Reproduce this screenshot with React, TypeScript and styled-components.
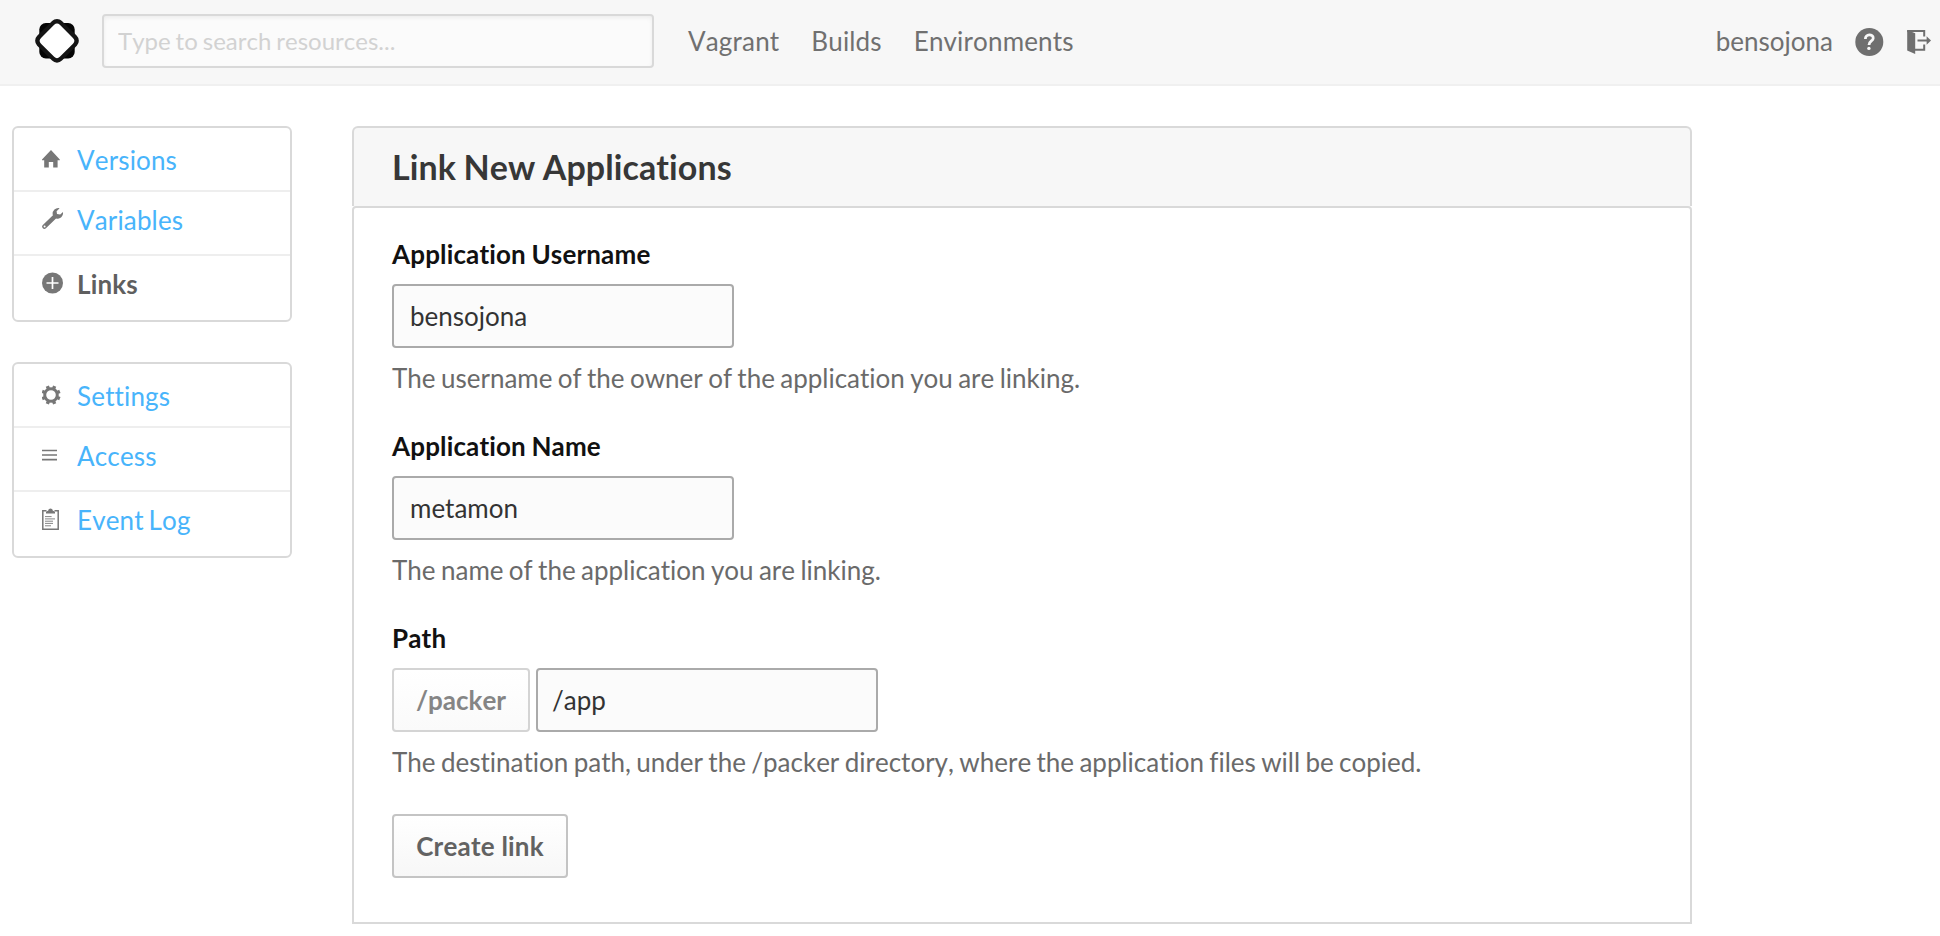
import React from "react";
import styled, { createGlobalStyle } from "styled-components";

const GlobalStyle = createGlobalStyle`
  *, *::before, *::after { box-sizing: border-box; }
  body {
    margin: 0;
    background: #fff;
    color: #666;
    font-family: Lato, sans-serif;
    font-size: 26px;
    line-height: 32px;
    font-kerning: none;
    font-variant-ligatures: none;
    -webkit-font-smoothing: antialiased;
  }
  input, button { font: inherit; font-kerning: none; font-variant-ligatures: none; }
`;

const TopBar = styled.header`
  display: flex;
  align-items: flex-start;
  height: 86px;
  padding: 14px 8px 0 34px;
  background: #f7f7f7;
  border-bottom: 2px solid #f0f0f0;
`;

const Logo = styled.svg`
  width: 46px;
  height: 46px;
  margin: 4px 22px 0 0;
`;

const Search = styled.input`
  width: 552px;
  height: 54px;
  padding: 0 14px 2px;
  border: 2px solid #d9d9d9;
  border-radius: 4px;
  background: #fbfbfb;
  box-shadow: inset 0 2px 4px rgba(0, 0, 0, 0.06);
  font-size: 24px;
  word-spacing: -1.2px;
  outline: none;
  &::placeholder { color: #d2d2d2; opacity: 1; }
`;

const Nav = styled.nav`
  display: flex;
  gap: 32px;
  margin: 11px 0 0 34px;
  letter-spacing: 0.15px;
`;

const NavLink = styled.a`
  color: #707070;
`;

const Account = styled.div`
  display: flex;
  margin: 11px 0 0 auto;
`;

const HelpIcon = styled.svg`
  width: 30px;
  height: 30px;
  margin: 2px 0 0 21px;
`;

const ExitIcon = styled.svg`
  width: 26px;
  height: 26px;
  margin: 4px 0 0 22px;
`;

const Page = styled.div`
  display: flex;
  align-items: flex-start;
  gap: 60px;
  padding: 40px 12px 0;
`;

const Sidebar = styled.aside`
  display: flex;
  flex-direction: column;
  gap: 40px;
  width: 280px;
`;

const Menu = styled.ul`
  list-style: none;
  margin: 0;
  padding: 0;
  height: 196px;
  border: 2px solid #d9d9d9;
  border-radius: 6px;
`;

const MenuItem = styled.li<{ $active?: boolean }>`
  display: flex;
  height: 64px;
  padding: 12px 0 0 28px;
  border-bottom: 2px solid #eee;
  color: ${(p) => (p.$active ? "#5f5f5f" : "#48b4fb")};
  font-weight: ${(p) => (p.$active ? 700 : 400)};
  letter-spacing: 0.15px;
  word-spacing: -2px;
  &:first-child { padding-top: 16px; }
  &:last-child { border-bottom: 0; }
`;

const MenuIcon = styled.svg`
  flex: none;
  width: 24px;
  height: 24px;
  margin: 2px 11px 0 0;
  color: #777;
`;

const Panel = styled.main`
  width: 1340px;
`;

const PanelHeader = styled.div`
  height: 80px;
  padding: 19px 38px 0;
  border: 2px solid #d9d9d9;
  border-bottom: 0;
  border-radius: 6px 6px 0 0;
  background: #f7f7f7;
`;

const Title = styled.h1`
  margin: 0;
  color: #373737;
  font-size: 34px;
  line-height: 40px;
  font-weight: 700;
  letter-spacing: 0.1px;
  word-spacing: -1px;
`;

const PanelBody = styled.form`
  height: 718px;
  padding: 30px 38px 0;
  border: 2px solid #d9d9d9;
  border-radius: 4px 4px 0 0;
`;

const Field = styled.div`
  height: 192px;
`;

const Label = styled.label`
  display: block;
  height: 46px;
  color: #111;
  font-weight: 700;
  letter-spacing: 0.15px;
  word-spacing: -1px;
`;

const Controls = styled.div`
  display: flex;
  gap: 6px;
`;

const Input = styled.input<{ $inset?: number }>`
  width: 342px;
  height: 64px;
  padding: 0 16px 0 ${(p) => p.$inset ?? 16}px;
  border: 2px solid #aaa;
  border-radius: 4px;
  background: #fbfbfb;
  color: #333;
  outline: none;
`;

const Hint = styled.p`
  margin: 14px 0 0;
  color: #6a6a6a;
  word-spacing: -1.3px;
`;

const Button = styled.button<{ $muted?: boolean; $width: number }>`
  width: ${(p) => p.$width}px;
  height: 64px;
  padding: 0;
  border: 2px solid ${(p) => (p.$muted ? "#d4d4d4" : "#c4c4c4")};
  border-radius: 4px;
  background: linear-gradient(#fff, ${(p) => (p.$muted ? "#fafafa" : "#f7f7f7")});
  color: ${(p) => (p.$muted ? "#858585" : "#626262")};
  font-weight: 700;
  letter-spacing: ${(p) => (p.$muted ? 0 : 0.2)}px;
`;

const icons: Record<string, React.ReactNode> = {
  home: (
    <path
      d="M9 4 L17.8 13.6 V14.3 H15.6 V21.6 H11.2 V16 H6.8 V21.6 H2.2 V14.3 H0 V13.6 Z"
      fill="currentColor"
    />
  ),
  wrench: (
    <>
      <path d="M2.4 20.6 L13.5 9.8" stroke="currentColor" strokeWidth="4.4" strokeLinecap="round" />
      <path
        d="M17.6 2.2 A5.8 5.8 0 0 0 10.6 8.6 L14 12.6 A5.8 5.8 0 0 0 21 6 L18.2 8.6 L15 8 L14.6 5.2 Z"
        fill="currentColor"
      />
      <circle cx="2.6" cy="20.6" r="1" fill="#fff" />
    </>
  ),
  plus: (
    <>
      <circle cx="10.5" cy="13" r="10.5" fill="currentColor" />
      <path d="M4.5 13 H16.5 M10.5 7 V19" stroke="#fff" strokeWidth="1.7" />
    </>
  ),
  gear: (
    <>
      <circle cx="9" cy="13" r="6.3" fill="none" stroke="currentColor" strokeWidth="3" />
      <g stroke="currentColor" strokeWidth="3.4">
        {[22.5, 67.5, 112.5, 157.5, 202.5, 247.5, 292.5, 337.5].map((a) => (
          <path key={a} d="M9 6.4 V3.4" transform={`rotate(${a} 9 13)`} />
        ))}
      </g>
    </>
  ),
  bars: <path d="M0 8.5 H15 M0 13 H15 M0 17.6 H15" stroke="currentColor" strokeWidth="1.6" />,
  clipboard: (
    <>
      <path
        d="M4.5 4.8 H0.8 V23.2 H16.2 V4.8 H12.5"
        fill="none"
        stroke="currentColor"
        strokeWidth="1.5"
      />
      <path
        d="M4 7.6 V5.8 L6.3 4.6 A2.2 2.2 0 0 1 10.7 4.6 L13 5.8 V7.6 Z"
        fill="currentColor"
      />
      <path
        d="M3 10.6 H9.6 M3 12.9 H13 M3 15.2 H11 M3 17.4 H11 M3 19.8 H9"
        stroke="currentColor"
        strokeWidth="0.9"
      />
    </>
  ),
};

type Entry = { label: string; icon: string; active?: boolean };

const menus: Entry[][] = [
  [
    { label: "Versions", icon: "home" },
    { label: "Variables", icon: "wrench" },
    { label: "Links", icon: "plus", active: true },
  ],
  [
    { label: "Settings", icon: "gear" },
    { label: "Access", icon: "bars" },
    { label: "Event Log", icon: "clipboard" },
  ],
];

export default function App() {
  return (
    <>
      <GlobalStyle />
      <TopBar>
        <Logo viewBox="0 0 46 46">
          <rect x="5.3" y="5.1" width="35.4" height="35.4" rx="6.5" fill="#050505" />
          <rect
            x="5.5"
            y="5.3"
            width="35"
            height="35"
            rx="7"
            transform="rotate(45 23 22.8)"
            fill="#151515"
          />
          <rect
            x="9.7"
            y="9.5"
            width="26.6"
            height="26.6"
            rx="4"
            transform="rotate(45 23 22.8)"
            fill="#fff"
          />
        </Logo>
        <Search placeholder="Type to search resources..." />
        <Nav>
          <NavLink>Vagrant</NavLink>
          <NavLink>Builds</NavLink>
          <NavLink>Environments</NavLink>
        </Nav>
        <Account>
          <NavLink>bensojona</NavLink>
          <HelpIcon viewBox="0 0 30 30">
            <circle cx="15.3" cy="15" r="14" fill="#6f6f6f" />
            <path
              d="M11.4 12 C11.2 6.6 19.4 6.8 19.2 11.2 C19.1 14 15 14 15 18"
              fill="none"
              stroke="#f7f7f7"
              strokeWidth="2.8"
            />
            <circle cx="14.9" cy="21.4" r="1.7" fill="#f7f7f7" />
          </HelpIcon>
          <ExitIcon viewBox="0 0 26 26">
            <path d="M1.2 1 L9.2 4.2 V25 L1.2 21.4 Z" fill="#6f6f6f" />
            <path
              d="M1.2 2 H18.2 V7.6 M18.2 15.4 V20.8 H9"
              fill="none"
              stroke="#6f6f6f"
              strokeWidth="2"
            />
            <path d="M11.5 11.5 H22" stroke="#6f6f6f" strokeWidth="2" />
            <path d="M20.6 7.2 L25 11.5 L20.6 15.8 Z" fill="#6f6f6f" />
          </ExitIcon>
        </Account>
      </TopBar>
      <Page>
        <Sidebar>
          {menus.map((menu, i) => (
            <Menu key={i}>
              {menu.map((m) => (
                <MenuItem key={m.label} $active={m.active}>
                  <MenuIcon viewBox="0 0 24 24">{icons[m.icon]}</MenuIcon>
                  {m.label}
                </MenuItem>
              ))}
            </Menu>
          ))}
        </Sidebar>
        <Panel>
          <PanelHeader>
            <Title>Link New Applications</Title>
          </PanelHeader>
          <PanelBody>
            <Field>
              <Label>Application Username</Label>
              <Controls>
                <Input defaultValue="bensojona" />
              </Controls>
              <Hint>The username of the owner of the application you are linking.</Hint>
            </Field>
            <Field>
              <Label>Application Name</Label>
              <Controls>
                <Input defaultValue="metamon" />
              </Controls>
              <Hint>The name of the application you are linking.</Hint>
            </Field>
            <Field>
              <Label>Path</Label>
              <Controls>
                <Button type="button" $muted $width={138}>/packer</Button>
                <Input defaultValue="/app" $inset={14} />
              </Controls>
              <Hint>
                The destination path, under the /packer directory, where the application files will be copied.
              </Hint>
            </Field>
            <Button type="button" $width={176}>Create link</Button>
          </PanelBody>
        </Panel>
      </Page>
    </>
  );
}
